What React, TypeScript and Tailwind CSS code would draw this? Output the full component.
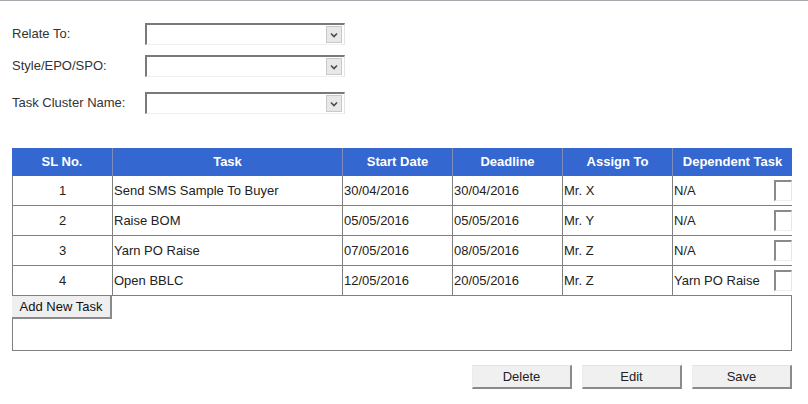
import React from "react";

const tasks = [
  { sl: 1, task: "Send SMS Sample To Buyer", start: "30/04/2016", deadline: "30/04/2016", assign: "Mr. X", dep: "N/A" },
  { sl: 2, task: "Raise BOM", start: "05/05/2016", deadline: "05/05/2016", assign: "Mr. Y", dep: "N/A" },
  { sl: 3, task: "Yarn PO Raise", start: "07/05/2016", deadline: "08/05/2016", assign: "Mr. Z", dep: "N/A" },
  { sl: 4, task: "Open BBLC", start: "12/05/2016", deadline: "20/05/2016", assign: "Mr. Z", dep: "Yarn PO Raise" },
];

const cols = "grid grid-cols-[100px_230px_110px_110px_110px_120px]";

function FakeSelect() {
  return (
    <div className="flex h-[22px] w-[200px] items-center justify-end border-t-2 border-l-2 border-r border-b border-t-[#7a7a7a] border-l-[#7a7a7a] border-r-[#e4e4e4] border-b-[#f0f0f0] bg-white pr-[2px]">
      <div className="flex h-[17px] w-[16px] items-center justify-center border border-[#c9c9c9] bg-[#e8e8e8]">
        <svg width="8" height="6" viewBox="0 0 8 6">
          <path d="M1 1.5 L4 4.5 L7 1.5" fill="none" stroke="#4a4a4a" strokeWidth="1.6" />
        </svg>
      </div>
    </div>
  );
}

function FormRow({ label, className = "" }: { label: string; className?: string }) {
  return (
    <div className={`flex items-center ${className}`}>
      <div className="w-[133px] text-[#333]">{label}</div>
      <FakeSelect />
    </div>
  );
}

function ActionButton({ label }: { label: string }) {
  return (
    <button className="h-[24px] w-[100px] border-t border-l border-r-2 border-b-2 border-t-[#e2e2e2] border-l-[#ececec] border-r-[#8a8a8a] border-b-[#8a8a8a] bg-[#f0f0f0] text-[13px] text-[#222]">
      {label}
    </button>
  );
}

export default function App() {
  return (
    <div className="h-[404px] w-[808px] overflow-hidden border-t border-[#a6a8ae] bg-white font-['Liberation_Sans',Arial,sans-serif] text-[13px] text-[#222]">
      {/* filter fields */}
      <div className="pl-3 pt-[22px]">
        <FormRow label="Relate To:" />
        <FormRow label="Style/EPO/SPO:" className="mt-[10px]" />
        <FormRow label="Task Cluster Name:" className="mt-[15px]" />
      </div>

      {/* task table */}
      <div className="ml-3 mt-[34px] w-[780px]">
        <div className={`${cols} h-[28px] bg-[#3467cf] font-bold text-white`}>
          {["SL No.", "Task", "Start Date", "Deadline", "Assign To", "Dependent Task"].map((h, i) => (
            <div
              key={h}
              className={`flex items-center justify-center whitespace-nowrap ${i > 0 ? "border-l border-[#7d8cb8]" : ""}`}
            >
              {h}
            </div>
          ))}
        </div>

        {tasks.map((t) => (
          <div key={t.sl} className={`${cols} h-[30px] border-b border-[#808080]`}>
            <div className="flex items-center justify-center border-l border-[#808080]">{t.sl}</div>
            <div className="flex items-center border-l border-[#808080] pl-[1px]">{t.task}</div>
            <div className="flex items-center border-l border-[#808080] pl-[1px]">{t.start}</div>
            <div className="flex items-center border-l border-[#808080] pl-[1px]">{t.deadline}</div>
            <div className="flex items-center border-l border-[#808080] pl-[1px]">{t.assign}</div>
            <div className="flex items-center justify-between border-l border-[#808080] pl-[1px]">
              <span className="whitespace-nowrap">{t.dep}</span>
              <div className="h-[21px] w-[18px] border-t-2 border-l-2 border-r border-b border-t-[#8a8a8a] border-l-[#8a8a8a] border-r-[#e6e6e6] border-b-[#eeeeee] bg-white" />
            </div>
          </div>
        ))}

        <div className="h-[55px] border-l border-r border-b border-[#808080]">
          <button className="-ml-px h-[23px] w-[100px] border-r-2 border-b-2 border-r-[#8a8a8a] border-b-[#8a8a8a] bg-[#efefef] text-[13px] text-[#111]">
            Add New Task
          </button>
        </div>
      </div>

      {/* actions */}
      <div className="ml-3 mt-[14px] flex w-[780px] justify-end gap-[10px]">
        <ActionButton label="Delete" />
        <ActionButton label="Edit" />
        <ActionButton label="Save" />
      </div>
    </div>
  );
}
